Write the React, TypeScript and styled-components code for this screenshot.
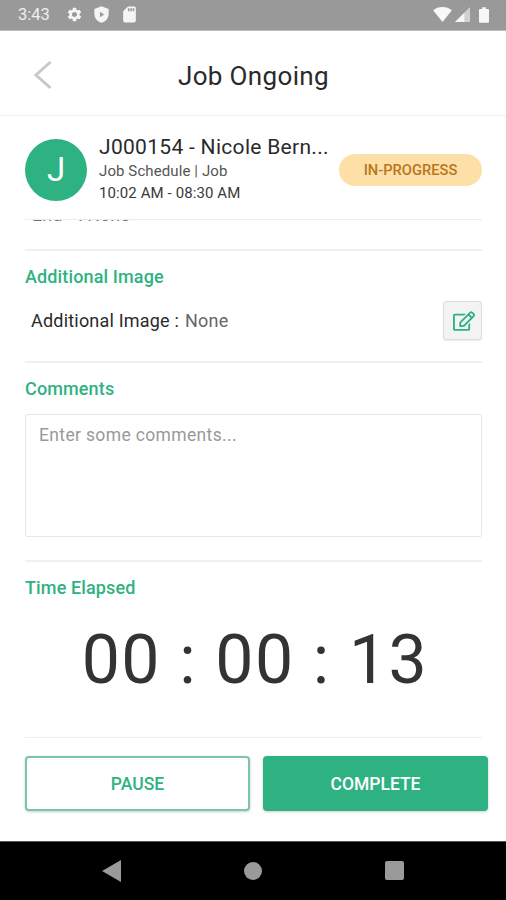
import React from "react";
import styled, { createGlobalStyle } from "styled-components";
import { MdSettings, MdSdCard } from "react-icons/md";
import { FaRegEdit } from "react-icons/fa";

const Global = createGlobalStyle`
  html, body { margin: 0; padding: 0; background: #fff; }
  body { font-family: Roboto, "Liberation Sans", sans-serif; }
  * { box-sizing: border-box; }
`;
const Screen = styled.div`
  width: 506px; height: 900px; display: flex; flex-direction: column; overflow: hidden; background: #fff;
`;
const StatusBar = styled.div`
  height: 31px; flex: none; background: #999; display: flex; align-items: center; padding: 0 17px 1px 18px; color: #f5f5f5;
  border-bottom: 1px solid #bdbdbd;
`;
const Clock = styled.span`font-size: 16.500px; color: #eee; margin-right: 14px; width: 34px;`;
const StatusIcons = styled.div`display: flex; align-items: center; gap: 9px;`;
const Spacer = styled.div`flex: 1;`;
const SysIcons = styled.div`display: flex; align-items: center; gap: 3px;`;
const Header = styled.header`
  height: 85px; flex: none; display: flex; align-items: center; justify-content: center; position: relative;
  border-bottom: 1px solid #eee;
`;
const Back = styled.svg`position: absolute; left: 33px; top: 29px;`;
const Title = styled.h1`margin: 6px 0 0 1px; font-size: 26px; font-weight: 400; color: #2a2a2a; letter-spacing: 0.35px;`;
const JobCard = styled.div`
  height: 103px; flex: none; display: flex; align-items: center; padding: 4px 24px 0 25px;
`;
const Avatar = styled.div`
  width: 62px; height: 62px; border-radius: 50%; background: #2fb281; color: #fff; flex: none;
  display: flex; align-items: center; justify-content: center; font-size: 33px; margin-right: 12px;
`;
const JobInfo = styled.div`flex: 1; min-width: 0; display: flex; flex-direction: column; gap: 3px; margin-top: -1px;`;
const JobName = styled.div`font-size: 21px; line-height: 24px; color: #2a2a2a; letter-spacing: 0.3px; white-space: nowrap;`;
const JobLine = styled.div<{ $dark?: boolean }>`
  font-size: 15px; line-height: 19px; color: ${(p) => (p.$dark ? "#3a3a3a" : "#555")}; letter-spacing: 0.1px;
`;
const Badge = styled.div`
  width: 143px; height: 32px; border-radius: 16px; background: #fddfa8; color: #b9761a; flex: none;
  display: flex; align-items: center; justify-content: center; font-size: 14.700px; font-weight: 500;
`;
const Scroll = styled.div`
  flex: 1; min-height: 0; overflow: hidden; padding: 0 24px 0 25px; display: flex; flex-direction: column;
`;
const ClippedRow = styled.div`
  height: 32px; flex: none; border-top: 1px solid #ececec; border-bottom: 2px solid #f0f0f0; overflow: hidden; position: relative;
`;
const ClippedText = styled.div`
  position: absolute; left: 7px; top: -15px; font-size: 18px; line-height: 20px; color: #777; white-space: nowrap;
`;
const ClippedValue = styled.span`margin-left: 16px;`;
const SectionTitle = styled.h2`
  margin: 0; font-size: 18px; font-weight: 500; line-height: 20px; color: #2fb281; letter-spacing: 0.13px;
`;
const ImageSection = styled.section`
  height: 112px; flex: none; padding-top: 16px; border-bottom: 2px solid #f0f0f0;
`;
const FieldRow = styled.div`
  display: flex; align-items: center; justify-content: space-between; padding-left: 6px; margin-top: 14px;
`;
const FieldText = styled.div`font-size: 18px; color: #2a2a2a; letter-spacing: 0.2px;`;
const FieldValue = styled.span`color: #666; margin-left: 6px;`;
const EditButton = styled.button`
  width: 39px; height: 39px; padding: 0 0 0 3px; border: 1px solid #ddd; border-radius: 3px; background: #f3f3f3;
  display: flex; align-items: center; justify-content: center; box-shadow: 0 1px 1px rgba(0,0,0,.08); color: #2fb281;
`;
const CommentsSection = styled.section`
  height: 199px; flex: none; padding-top: 16px; border-bottom: 2px solid #f0f0f0;
`;
const CommentBox = styled.div`
  height: 123px; margin-top: 15px; border: 1px solid #e6e6e6; border-radius: 2px; padding: 10px 13px;
  font-size: 17.500px; line-height: 21px; color: #999; letter-spacing: 0.35px;
`;
const TimeSection = styled.section`
  height: 176px; flex: none; padding-top: 16px; border-bottom: 1px solid #eee;
`;
const Timer = styled.div`
  margin: 22px 0 0 3px; text-align: center; font-size: 68px; line-height: 81px; font-weight: 400; color: #333; letter-spacing: 1.400px; white-space: nowrap;
`;
const Actions = styled.div`display: flex; gap: 13px; margin: 18px -6px 0 0;`;
const ActionButton = styled.button<{ $filled?: boolean }>`
  flex: 0 0 225px; height: 55px; padding: 0; border-radius: 4px; font-family: inherit; font-size: 17.500px; font-weight: 500;
  border: ${(p) => (p.$filled ? "none" : "2px solid #7cc5aa")};
  background: ${(p) => (p.$filled ? "#2fb281" : "#fff")};
  color: ${(p) => (p.$filled ? "#fff" : "#2fb281")};
  box-shadow: 0 1px 3px rgba(0,0,0,.2);
`;
const NavBar = styled.nav`
  height: 59px; flex: none; background: #000; border-top: 1px solid #555;
  display: flex; align-items: center; justify-content: center; gap: 123px; padding-bottom: 1px;
`;

export default function App() {
  return (
    <Screen>
      <Global />
      <StatusBar>
        <Clock>3:43</Clock>
        <StatusIcons>
          <MdSettings size={17} />
          <svg width="19" height="19" viewBox="0 0 24 24">
            <path fill="#f5f5f5" d="M12 1.500 3 5v6.500c0 5.300 3.800 9.800 9 11 5.200-1.200 9-5.700 9-11V5z" />
            <path fill="#999" d="M10 8.500v7l5.500-3.500z" />
          </svg>
          <MdSdCard size={19} />
        </StatusIcons>
        <Spacer />
        <SysIcons>
          <svg width="19" height="15" viewBox="0 0 20 16" fill="#f8f8f8"><path d="M0 3.500C2.500 1.300 6 0 10 0s7.500 1.300 10 3.500L10 16z" /></svg>
          <svg width="15" height="15" viewBox="0 0 16 16"><path fill="#d0d0d0" d="M0 16 16 0v16z" /><path fill="#f5f5f5" d="M0 16 10 6v10z" /></svg>
          <svg width="10" height="16" viewBox="0 0 11 17" fill="#f8f8f8" style={{ marginLeft: 6 }}><path d="M3.500 0h4v2H10a1 1 0 0 1 1 1v13a1 1 0 0 1-1 1H1a1 1 0 0 1-1-1V3a1 1 0 0 1 1-1h2.500z" /></svg>
        </SysIcons>
      </StatusBar>
      <Header>
        <Back width="20" height="30" viewBox="0 0 20 30" fill="none" stroke="#c8c8c8" strokeWidth="3">
          <path d="M17.500 2 3 15l14.500 13" />
        </Back>
        <Title>Job Ongoing</Title>
      </Header>
      <JobCard>
        <Avatar>J</Avatar>
        <JobInfo>
          <JobName>J000154 - Nicole Bern...</JobName>
          <JobLine>Job Schedule | Job</JobLine>
          <JobLine $dark>10:02 AM - 08:30 AM</JobLine>
        </JobInfo>
        <Badge>IN-PROGRESS</Badge>
      </JobCard>
      <Scroll>
        <ClippedRow><ClippedText>End<ClippedValue>: None</ClippedValue></ClippedText></ClippedRow>
        <ImageSection>
          <SectionTitle>Additional Image</SectionTitle>
          <FieldRow>
            <FieldText>Additional Image :<FieldValue>None</FieldValue></FieldText>
            <EditButton aria-label="Edit">
              <FaRegEdit size={22} />
            </EditButton>
          </FieldRow>
        </ImageSection>
        <CommentsSection>
          <SectionTitle>Comments</SectionTitle>
          <CommentBox>Enter some comments...</CommentBox>
        </CommentsSection>
        <TimeSection>
          <SectionTitle>Time Elapsed</SectionTitle>
          <Timer>00 : 00 : 13</Timer>
        </TimeSection>
        <Actions>
          <ActionButton>PAUSE</ActionButton>
          <ActionButton $filled>COMPLETE</ActionButton>
        </Actions>
      </Scroll>
      <NavBar>
        <svg width="19" height="22" viewBox="0 0 19 22" fill="#9a9a9a"><path d="M19 0v22L0 11z" /></svg>
        <svg width="18" height="18" viewBox="0 0 20 20" fill="#9a9a9a"><circle cx="10" cy="10" r="10" /></svg>
        <svg width="19" height="19" viewBox="0 0 20 20" fill="#9a9a9a"><rect width="20" height="20" rx="2" /></svg>
      </NavBar>
    </Screen>
  );
}
